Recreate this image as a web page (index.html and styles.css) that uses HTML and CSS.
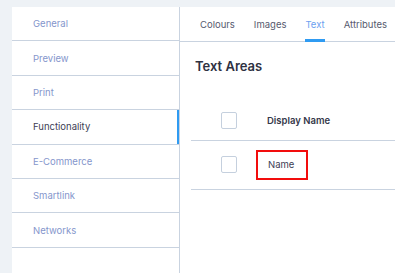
FILE: index.html
```html
<!DOCTYPE html>
<html lang="en">
<head>
    <meta charset="UTF-8">
    <meta name="viewport" content="width=device-width, initial-scale=1.0">
    <title>Settings</title>
    <link rel="stylesheet" href="styles.css">
</head>
<body>
    <div class="settings">
        <ul class="side-menu">
            <li>General</li>
            <li>Preview</li>
            <li>Print</li>
            <li class="active">Functionality</li>
            <li>E-Commerce</li>
            <li>Smartlink</li>
            <li>Networks</li>
        </ul>

        <div class="panel">
            <div class="tabs">
                <span class="tab">Colours</span>
                <span class="tab">Images</span>
                <span class="tab active">Text</span>
                <span class="tab">Attributes</span>
            </div>

            <div class="panel-body">
                <h3>Text Areas</h3>

                <div class="table">
                    <div class="row head">
                        <div class="cell-check"><span class="checkbox"></span></div>
                        <div class="cell-name">Display Name</div>
                    </div>
                    <div class="row">
                        <div class="cell-check"><span class="checkbox"></span></div>
                        <div class="cell-name"><span class="highlight">Name</span></div>
                    </div>
                </div>
            </div>
        </div>
    </div>
</body>
</html>
```

FILE: styles.css
```css
body {
    margin: 0;
    background-color: #eef2f6;
    font-family: 'Inter', 'Open Sans', sans-serif;
    font-size: 9.5px;
    color: #3d4055;
}

.settings {
    display: flex;
    padding: 7px 0 0 12px;
    height: 266px;
}

/* left menu */
.side-menu {
    list-style: none;
    margin: 0;
    padding: 0;
    width: 167px;
    flex-shrink: 0;
    background-color: #ffffff;
    border-right: 1px solid #c9d3e0;
}

.side-menu li {
    height: 33.4px;
    display: flex;
    align-items: center;
    padding-left: 21px;
    border-bottom: 1px solid #c9d3e0;
    color: #8596cc;
    position: relative;
}

.side-menu li.active {
    color: #3d4055;
}

.side-menu li.active::after {
    content: '';
    position: absolute;
    right: 0;
    top: 0;
    bottom: 0;
    width: 2px;
    background-color: #2f9bf2;
}

/* right panel */
.panel {
    flex: 1;
    background-color: #ffffff;
    min-width: 0;
    overflow: hidden;
}

.tabs {
    display: flex;
    gap: 19px;
    height: 34px;
    padding-left: 20px;
    border-bottom: 1px solid #c9d3e0;
    white-space: nowrap;
}

.tab {
    display: flex;
    align-items: center;
    color: #565a6e;
    position: relative;
}

.tab.active {
    color: #6d9ff0;
}

.tab.active::after {
    content: '';
    position: absolute;
    left: 0;
    right: 0;
    bottom: -1px;
    height: 3px;
    background-color: #2f9bf2;
}

.panel-body {
    padding: 0 0 0 11px;
}

.panel-body h3 {
    margin: 0;
    padding: 16px 0 0 4px;
    font-size: 13px;
    font-weight: 600;
    color: #2e3142;
    line-height: 16px;
}

.table {
    margin-top: 27px;
}

.row {
    display: flex;
    align-items: center;
    height: 49px;
    padding-bottom: 1px;
    box-sizing: border-box;
    border-bottom: 1px solid #c9d3e0;
}

.row.head {
    height: 40px;
    padding-bottom: 0;
    font-weight: 600;
    color: #35384a;
}

.cell-check {
    width: 76px;
    padding-left: 30px;
    box-sizing: border-box;
    display: flex;
}

.checkbox {
    width: 14px;
    height: 15px;
    border: 1px solid #c5d0de;
    border-radius: 2px;
}

.cell-name {
    display: flex;
    align-items: center;
}

.highlight {
    display: inline-block;
    margin-left: -11px;
    padding: 0 10px;
    height: 26px;
    line-height: 26px;
    width: 28px;
    border: 2px solid #f20d0d;
    color: #3d4055;
}
```
